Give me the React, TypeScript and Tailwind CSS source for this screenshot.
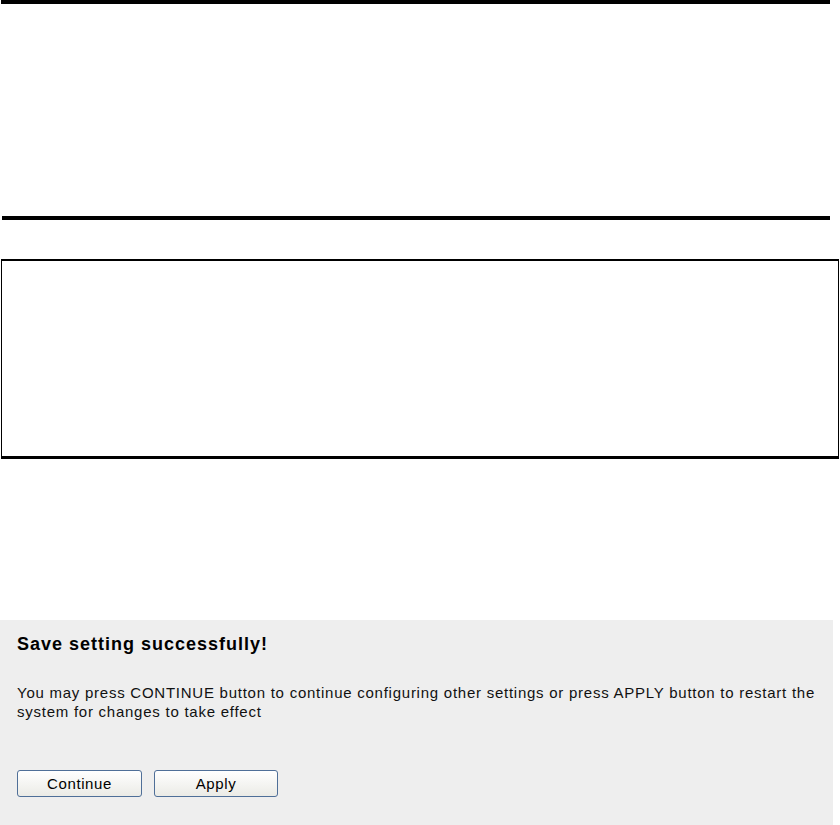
export default function App() {
    return (
        <div className="w-[840px] h-[825px] bg-white font-['Liberation_Sans',Arial,sans-serif] text-black overflow-hidden">
            {/* top rule */}
            <div className="ml-[1px] w-[829px] h-[4px] bg-black" />

            {/* second rule */}
            <div className="mt-[212px] ml-[2px] w-[828px] h-[4px] bg-black" />

            {/* empty framed box */}
            <div className="mt-[39px] ml-[1px] w-[838px] h-[200px] border-l border-r border-black border-t-2 border-b-[3px]" />

            {/* result panel */}
            <div className="mt-[161px] w-[833px] h-[205px] bg-[#eeeeee] pl-[17px] pt-[15px]">
                <h2 className="text-[18px] leading-[18px] font-bold tracking-[1px]">Save setting successfully!</h2>
                <p className="mt-[30px] text-[15px] leading-[19px] tracking-[0.75px] pr-[8px] text-[#111]">
                    You may press CONTINUE button to continue configuring other settings or press APPLY button to restart the
                    system for changes to take effect
                </p>
                <div className="mt-[49px] flex gap-[12px]">
                    <button className="w-[125px] h-[27px] rounded-[3px] border border-[#4f6f98] bg-gradient-to-b from-white to-[#ebebe6] text-[15px] leading-none tracking-[0.6px]">
                        Continue
                    </button>
                    <button className="w-[124px] h-[27px] rounded-[3px] border border-[#4f6f98] bg-gradient-to-b from-white to-[#ebebe6] text-[15px] leading-none tracking-[0.6px]">
                        Apply
                    </button>
                </div>
            </div>
        </div>
    );
}
